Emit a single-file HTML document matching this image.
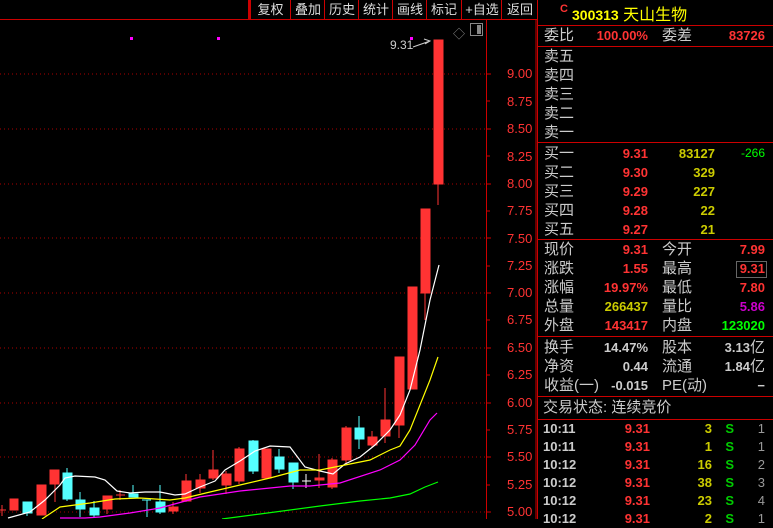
<!DOCTYPE html><html><head><meta charset="utf-8"><style>
body{margin:0;width:773px;height:519px;background:#000;overflow:hidden;position:relative;font-family:"Liberation Sans","Noto Sans CJK SC",sans-serif}
.a{position:absolute;white-space:nowrap}
.tb{position:absolute;top:0;height:19px;border-left:1px solid #c00;color:#ddd;font-size:13px;line-height:19px;text-align:center}
.lbl{position:absolute;font-size:13px;color:#f33;left:507px}
.r{position:absolute;left:537px;width:236px;height:1px;background:#c00}
.cn{position:absolute;left:544px;color:#ccc;font-size:15px;line-height:19px}
.n{position:absolute;font-weight:bold;font-size:13px;line-height:19px;text-align:right}
</style></head><body>
<div class="a" style="left:0;top:19px;width:537px;height:1px;background:#c00"></div>
<div class="a" style="left:248px;top:0;width:2px;height:19px;background:#c00"></div>
<div class="tb" style="left:250px;width:39px">复权</div>
<div class="tb" style="left:290px;width:34px">叠加</div>
<div class="tb" style="left:324px;width:34px">历史</div>
<div class="tb" style="left:358px;width:34px">统计</div>
<div class="tb" style="left:392px;width:34px">画线</div>
<div class="tb" style="left:426px;width:34px">标记</div>
<div class="tb" style="left:461px;width:40px">+自选</div>
<div class="tb" style="left:501px;width:36px">返回</div>
<div class="a" style="left:486px;top:19px;width:1px;height:500px;background:#c00"></div>
<div class="a" style="left:453px;top:25px;color:#888;font-size:12px">◇</div>
<div class="a" style="left:470px;top:23px;width:11px;height:11px;border:1px solid #888"><div style="position:absolute;right:1px;top:1px;width:4px;height:9px;background:#888"></div></div>
<div class="a" style="left:390px;top:38px;color:#ccc;font-size:12px">9.31</div>
<svg class="a" style="left:0;top:0" width="537" height="519">
<g stroke="#a00" stroke-dasharray="1,3">
<line x1="0" x2="486" y1="74" y2="74"/><line x1="0" x2="486" y1="129" y2="129"/><line x1="0" x2="486" y1="184" y2="184"/><line x1="0" x2="486" y1="238" y2="238"/><line x1="0" x2="486" y1="293" y2="293"/><line x1="0" x2="486" y1="348" y2="348"/><line x1="0" x2="486" y1="403" y2="403"/><line x1="0" x2="486" y1="457" y2="457"/><line x1="0" x2="486" y1="512" y2="512"/></g>
<g stroke="#c00"><path d="M486 74h5M486 101h4M486 129h5M486 156h4M486 184h5M486 211h4M486 238h5M486 266h4M486 293h5M486 320h4M486 348h5M486 375h4M486 403h5M486 430h4M486 457h5M486 485h4M486 512h5"/><line x1="536" y1="19" x2="536" y2="519"/></g>
<path d="M413 47 L430 41 M424 39 L430 41 L425 44" stroke="#ccc" fill="none"/>
<rect x="130" y="37" width="3" height="3" fill="#f0f"/><rect x="217" y="37" width="3" height="3" fill="#f0f"/><rect x="410" y="37" width="3" height="3" fill="#f0f"/>
<g stroke="#f33" fill="#f33">
<line x1="2" y1="505" x2="2" y2="516"/><line x1="-2" y1="510" x2="6" y2="510"/>
<rect x="10" y="499" width="8" height="11"/><rect x="37" y="485" width="9" height="30"/>
<line x1="55" y1="484" x2="55" y2="502"/><rect x="50" y="470" width="9" height="14"/>
<line x1="107" y1="496" x2="107" y2="514"/><rect x="103" y="496" width="9" height="13"/>
<line x1="120" y1="490" x2="120" y2="500"/><line x1="116" y1="495" x2="125" y2="495"/>
<line x1="173" y1="502" x2="173" y2="514"/><rect x="169" y="507" width="9" height="4"/>
<line x1="186" y1="474" x2="186" y2="502"/><rect x="182" y="481" width="9" height="20"/>
<line x1="200" y1="474" x2="200" y2="493"/><rect x="196" y="480" width="9" height="8"/>
<line x1="213" y1="450" x2="213" y2="480"/><rect x="209" y="470" width="9" height="8"/>
<line x1="226" y1="471" x2="226" y2="494"/><rect x="222" y="474" width="9" height="11"/>
<line x1="239" y1="447" x2="239" y2="484"/><rect x="235" y="449" width="9" height="32"/>
<rect x="262" y="449" width="9" height="29"/>
<line x1="319" y1="454" x2="319" y2="488"/><rect x="315" y="478" width="9" height="2"/>
<line x1="332" y1="458" x2="332" y2="489"/><rect x="328" y="460" width="9" height="27"/>
<line x1="346" y1="426" x2="346" y2="464"/><rect x="342" y="428" width="9" height="32"/>
<line x1="372" y1="431" x2="372" y2="448"/><rect x="368" y="437" width="9" height="8"/>
<line x1="385" y1="388" x2="385" y2="443"/><rect x="381" y="420" width="9" height="16"/>
<line x1="399" y1="357" x2="399" y2="438"/><rect x="395" y="357" width="9" height="68"/>
<rect x="408" y="287" width="9" height="102"/>
<line x1="425" y1="293" x2="425" y2="320"/><rect x="421" y="209" width="9" height="84"/>
<line x1="438" y1="184" x2="438" y2="205"/><rect x="434" y="40" width="9" height="144"/>
</g>
<g stroke="#5ff" fill="#5ff">
<line x1="27" y1="502" x2="27" y2="516"/><rect x="23" y="502" width="9" height="11"/>
<line x1="67" y1="468" x2="67" y2="501"/><rect x="63" y="473" width="9" height="26"/>
<line x1="80" y1="492" x2="80" y2="517"/><rect x="76" y="500" width="9" height="9"/>
<line x1="94" y1="501" x2="94" y2="517"/><rect x="90" y="508" width="9" height="7"/>
<line x1="133" y1="485" x2="133" y2="497"/><rect x="129" y="494" width="9" height="3"/>
<line x1="147" y1="500" x2="147" y2="517"/><line x1="142" y1="500" x2="151" y2="500"/>
<line x1="160" y1="485" x2="160" y2="514"/><rect x="156" y="502" width="9" height="10"/>
<line x1="253" y1="440" x2="253" y2="474"/><rect x="249" y="441" width="9" height="30"/>
<line x1="279" y1="449" x2="279" y2="473"/><rect x="275" y="457" width="9" height="12"/>
<line x1="293" y1="463" x2="293" y2="489"/><rect x="289" y="463" width="9" height="19"/>
<line x1="359" y1="416" x2="359" y2="449"/><rect x="355" y="428" width="9" height="11"/>
</g>
<g stroke="#fff"><line x1="306" y1="474" x2="306" y2="488"/><line x1="302" y1="481" x2="311" y2="481"/></g>
<g fill="none" stroke-width="1.2">
<polyline stroke="#fff" points="8,518 30,512 45,500 60,485 65,478 75,476 95,477 105,480 117,491 130,493 145,492 160,492 175,495 185,494 200,487 215,481 225,470 240,461 255,451 270,446 290,447 305,467 320,471 333,474 345,464 360,457 375,445 390,430 400,415 410,390 420,350 430,300 439,265"/>
<polyline stroke="#ff0" points="42,519 60,507 90,503 115,499 140,498 170,500 185,498 210,492 240,485 270,478 300,470 320,470 340,466 370,460 390,450 400,446 410,430 420,405 430,380 438,357"/>
<polyline stroke="#f0f" points="60,518 85,518 100,517 130,513 160,508 200,497 240,491 290,486 310,486 340,483 380,470 400,460 415,445 430,420 437,413"/>
<polyline stroke="#0f0" points="222,519 260,514 320,506 360,501 390,498 410,494 425,487 438,482"/>
</g></svg>
<div class="lbl" style="top:66px">9.00</div><div class="lbl" style="top:94px">8.75</div><div class="lbl" style="top:121px">8.50</div><div class="lbl" style="top:149px">8.25</div><div class="lbl" style="top:176px">8.00</div><div class="lbl" style="top:203px">7.75</div><div class="lbl" style="top:231px">7.50</div><div class="lbl" style="top:258px">7.25</div><div class="lbl" style="top:285px">7.00</div><div class="lbl" style="top:312px">6.75</div><div class="lbl" style="top:340px">6.50</div><div class="lbl" style="top:367px">6.25</div><div class="lbl" style="top:395px">6.00</div><div class="lbl" style="top:422px">5.75</div><div class="lbl" style="top:449px">5.50</div><div class="lbl" style="top:477px">5.25</div><div class="lbl" style="top:504px">5.00</div>
<div class="a" style="left:537px;top:0;width:1px;height:519px;background:#c00"></div>
<div class="a" style="left:560px;top:3px;color:#f33;font-size:11px;font-weight:bold">C</div>
<div class="a" style="left:572px;top:1px;color:#ff0;font-size:16px"><b style="font-size:14px">300313</b> 天山生物</div>
<div class="r" style="top:25px"></div><div class="r" style="top:46px"></div><div class="r" style="top:142px"></div><div class="r" style="top:239px"></div><div class="r" style="top:336px"></div><div class="r" style="top:396px"></div><div class="r" style="top:419px"></div>
<div class="cn" style="top:26px">委比</div><div class="n" style="top:26px;left:580px;width:68px;color:#f33">100.00%</div>
<div class="cn" style="top:26px;left:662px">委差</div><div class="n" style="top:26px;left:700px;width:65px;color:#f33">83726</div>
<div class="cn" style="top:47px;line-height:19px">卖五<br>卖四<br>卖三<br>卖二<br>卖一</div>
<div class="cn" style="top:144px">买一<br>买二<br>买三<br>买四<br>买五</div>
<div class="n" style="top:144px;left:590px;width:58px;color:#f33">9.31<br>9.30<br>9.29<br>9.28<br>9.27</div>
<div class="n" style="top:144px;left:660px;width:55px;color:#cc0">83127<br>329<br>227<br>22<br>21</div>
<div class="n" style="top:144px;left:720px;width:45px;color:#0f0;font-weight:normal;font-size:12px">-266</div>
<div class="cn" style="top:240px">现价<br>涨跌<br>涨幅<br>总量<br>外盘</div>
<div class="n" style="top:240px;left:580px;width:68px;color:#f33">9.31<br>1.55<br>19.97%<br><span style="color:#cc0">266437</span><br>143417</div>
<div class="cn" style="top:240px;left:662px">今开<br>最高<br>最低<br>量比<br>内盘</div>
<div class="n" style="top:240px;left:700px;width:65px;color:#f33">7.99<br>9.31<br>7.80<br><span style="color:#c0c">5.86</span><br><span style="color:#0f0">123020</span></div>
<div class="a" style="left:736px;top:261px;width:29px;height:15px;border:1px solid #666"></div>
<div class="cn" style="top:338px">换手<br>净资<br>收益(一)</div>
<div class="n" style="top:338px;left:580px;width:68px;color:#ccc">14.47%<br>0.44<br>-0.015</div>
<div class="cn" style="top:338px;left:662px">股本<br>流通<br>PE(动)</div>
<div class="n" style="top:338px;left:700px;width:65px;color:#ccc">3.13<span style="font-weight:normal;font-size:15px">亿</span><br>1.84<span style="font-weight:normal;font-size:15px">亿</span><br>−</div>
<div class="cn" style="top:398px;left:543px">交易状态: 连续竞价</div>
<div class="n" style="top:420px;left:543px;width:40px;color:#ccc;text-align:left;line-height:18px">10:11<br>10:11<br>10:12<br>10:12<br>10:12<br>10:12</div>
<div class="n" style="top:420px;left:600px;width:50px;color:#f33;line-height:18px">9.31<br>9.31<br>9.31<br>9.31<br>9.31<br>9.31</div>
<div class="n" style="top:420px;left:670px;width:42px;color:#cc0;line-height:18px">3<br>1<br>16<br>38<br>23<br>2</div>
<div class="n" style="top:420px;left:722px;width:12px;color:#0c0;line-height:18px">S<br>S<br>S<br>S<br>S<br>S</div>
<div class="n" style="top:420px;left:745px;width:20px;color:#999;line-height:18px;font-weight:normal">1<br>1<br>2<br>3<br>4<br>1</div>
</body></html>
